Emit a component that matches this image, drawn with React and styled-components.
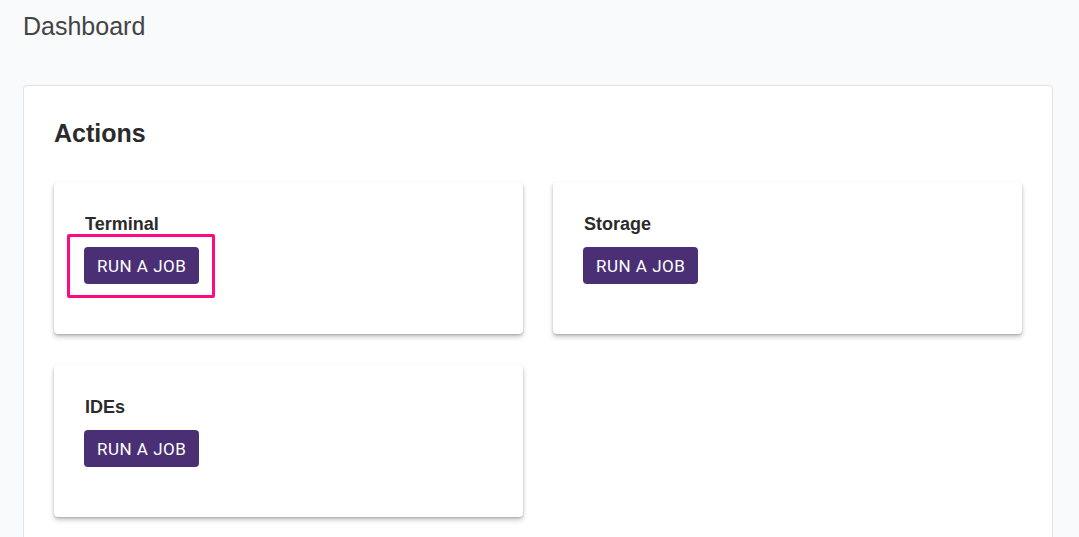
import React from 'react'
import styled, { createGlobalStyle } from 'styled-components'

const GlobalStyle = createGlobalStyle`
  body {
    margin: 0;
    background: #f9fafc;
    font-family: "Liberation Sans", Arial, sans-serif;
  }
`;

const actions = [
  { name: 'Terminal', highlighted: true },
  { name: 'Storage' },
  { name: 'IDEs' },
]

const App = () => {
  return (
    <Page>
      <GlobalStyle />
      <PageTitle>Dashboard</PageTitle>
      <Panel>
        <PanelTitle>Actions</PanelTitle>
        <CardGrid>
          {actions.map((a) => (
            <Card key={a.name}>
              <CardTitle>{a.name}</CardTitle>
              <ButtonWrap>
                <RunButton>RUN A JOB</RunButton>
                {a.highlighted && <Highlight />}
              </ButtonWrap>
            </Card>
          ))}
        </CardGrid>
      </Panel>
    </Page>
  )
}

const Page = styled.div`
  padding: 12px 26px 0 23px;
  height: 537px;
  box-sizing: border-box;
  overflow: hidden;
`;

const PageTitle = styled.h1`
  margin: 0;
  font-size: 25px;
  font-weight: 400;
  line-height: 28px;
  color: #444;
`;

const Panel = styled.div`
  margin-top: 45px;
  background: #fff;
  border: 1px solid #e2e2e4;
  border-radius: 4px;
  padding: 30px 30px 40px 30px;
`;

const PanelTitle = styled.h2`
  margin: 0 0 32px 0;
  font-size: 25px;
  font-weight: 700;
  line-height: 34px;
  color: #2b2b2b;
`;

const CardGrid = styled.div`
  display: grid;
  grid-template-columns: 1fr 1fr;
  column-gap: 30px;
  row-gap: 31px;
`;

const Card = styled.div`
  background: #fff;
  border-radius: 4px;
  box-shadow: 0 1px 2px rgba(0, 0, 0, 0.18), 0 3px 5px rgba(0, 0, 0, 0.22);
  padding: 32px 31px 50px 31px;
  height: 152px;
  box-sizing: border-box;
`;

const CardTitle = styled.div`
  font-size: 18px;
  font-weight: 700;
  line-height: 20px;
  color: #2b2b2b;
  margin-bottom: 13px;
`;

const ButtonWrap = styled.div`
  position: relative;
  display: inline-block;
  margin-left: -1px;
`;

const RunButton = styled.button`
  display: inline-flex;
  align-items: center;
  justify-content: center;
  height: 37px;
  padding: 0 13px;
  border: none;
  border-radius: 4px;
  background: #4a2f75;
  color: #fff;
  font-family: Roboto, "Liberation Sans", sans-serif;
  font-size: 17px;
  font-weight: 400;
  letter-spacing: 0.5px;
  cursor: pointer;
`;

const Highlight = styled.div`
  position: absolute;
  left: -17px;
  top: -13px;
  right: -16px;
  bottom: -14px;
  border: 3px solid #ff0a84;
  border-radius: 2px;
  pointer-events: none;
`;

export default App
